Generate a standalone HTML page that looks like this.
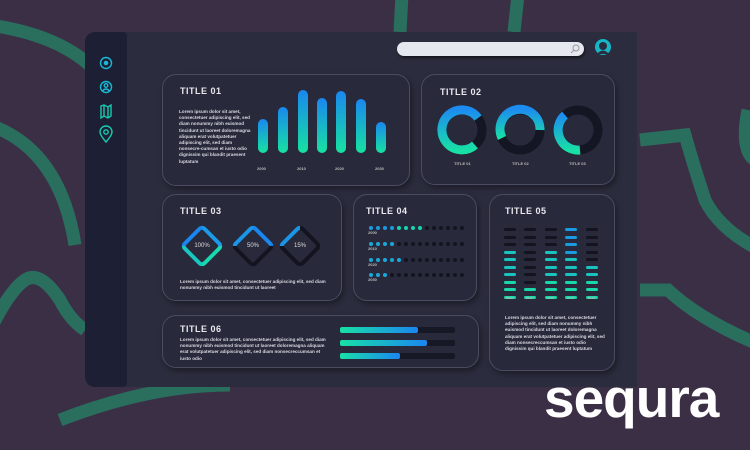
<!DOCTYPE html>
<html><head><meta charset="utf-8"><style>
*{margin:0;padding:0;box-sizing:border-box}
body{width:750px;height:450px;overflow:hidden;background:#3b2f45;font-family:"Liberation Sans",sans-serif;position:relative}
.a{position:absolute}
.panel{left:85px;top:32px;width:552px;height:355px;background:#2b2c3d;border-radius:10px 0 0 10px}
.side{left:85px;top:32px;width:42px;height:355px;background:#1d2034;border-radius:10px 4px 4px 10px}
.card{position:absolute;border:1.5px solid #4a4c62;border-radius:14px;background:#282a3b;box-shadow:2px 3px 6px rgba(0,0,0,.35)}
.t{position:absolute;color:#e8e8ef;font-size:9px;font-weight:bold;letter-spacing:.5px}
.tx{position:absolute;color:#d8d8e0;font-size:4.6px;line-height:6.2px;font-weight:bold}
.bar{position:absolute;width:10px;border-radius:5px;background:linear-gradient(#1a86f0,#17e3a0)}
.yr{position:absolute;color:#bbb;font-size:4px;font-weight:bold}
.dot{position:absolute;width:4px;height:4px;border-radius:50%}
.ds{position:absolute;width:12px;height:3px;border-radius:1.5px}
.dia{position:absolute;width:32px;height:32px;border-radius:6px;transform:rotate(45deg);border:4px solid #13141f}
.pc{position:absolute;color:#ddd;font-size:6px;width:40px;text-align:center}
</style></head><body>
<svg class="a" style="left:0;top:0" width="750" height="450">
<g fill="none" stroke="#2a6e5e" stroke-width="13">
<path d="M-10 25 Q60 35 95 70"/>
<path d="M-10 125 Q60 150 75 245"/>
<path d="M-10 330 Q10 290 25 280 Q40 270 60 300 Q70 320 85 330"/>
<path d="M60 420 Q150 385 230 385"/>
<path d="M402 -5 L400 32"/><path d="M518 -5 L514 32"/>
<path d="M640 140 L685 135 Q695 170 705 200 Q720 230 760 250"/>
<path d="M640 290 L668 290 Q700 320 760 345"/>
<path d="M748 110 Q740 150 755 160"/>
</g></svg>
<div class="a panel"></div>
<div class="a side"></div>
<svg class="a" style="left:98px;top:55px" width="20" height="90" fill="none" stroke="#19b8d6" stroke-width="1.4">
<circle cx="8" cy="8" r="5.5"/><circle cx="8" cy="8" r="1.6" fill="#19b8d6"/>
<circle cx="8" cy="32" r="5.5"/><circle cx="8" cy="30.5" r="1.8"/><path d="M4.5 36 Q8 32 11.5 36"/>
<path d="M3 51 L6 50 L10 52 L13 50 L13 61 L10 63 L6 61 L3 63 Z M6 50 V61 M10 52 V63" stroke="#19c8b0"/>
<path d="M8 87 Q2 80 2 77 A6 6 0 0 1 14 77 Q14 80 8 87 Z" stroke="#19c8b0"/><circle cx="8" cy="77" r="2.2" stroke="#19c8b0"/>
</svg>
<div class="a" style="left:397px;top:42px;width:187px;height:14px;border-radius:7px;background:#e6e8ef;box-shadow:1px 2px 2px rgba(0,0,0,.5)"></div>
<svg class="a" style="left:569px;top:43px" width="12" height="12" fill="none" stroke="#999" stroke-width="1"><circle cx="7" cy="5" r="3"/><path d="M5 7 L2 10"/></svg>
<svg class="a" style="left:594px;top:38px" width="18" height="18"><circle cx="9" cy="9" r="8" fill="#17b6c6"/><circle cx="9" cy="8" r="4" fill="#2b2c3d"/><path d="M3 16 Q9 9 15 16 Z" fill="#2b2c3d"/></svg>

<div class="card" style="left:162px;top:74px;width:248px;height:112px"></div>
<div class="t" style="left:180px;top:86px">TITLE 01</div>
<div class="tx" style="left:179px;top:109px;width:72px">Lorem ipsum dolor sit amet, consectetuer adipiscing elit, sed diam nonummy nibh euismod tincidunt ut laoreet doloremagna aliquam erat volutpatetuer adipiscing elit, sed diam nonsecre-cumsan et iusto odio dignissim qui blandit praesent luptatum</div>
<div class="bar" style="left:258px;top:119px;height:34px"></div>
<div class="bar" style="left:278px;top:107px;height:46px"></div>
<div class="bar" style="left:298px;top:90px;height:63px"></div>
<div class="bar" style="left:317px;top:98px;height:55px"></div>
<div class="bar" style="left:336px;top:91px;height:62px"></div>
<div class="bar" style="left:356px;top:99px;height:54px"></div>
<div class="bar" style="left:376px;top:122px;height:31px"></div>
<div class="yr" style="left:257px;top:166px">2000</div><div class="yr" style="left:297px;top:166px">2010</div><div class="yr" style="left:335px;top:166px">2020</div><div class="yr" style="left:375px;top:166px">2030</div>

<div class="card" style="left:421px;top:74px;width:194px;height:111px"></div>
<div class="t" style="left:440px;top:87px">TITLE 02</div>
<svg class="a" style="left:430px;top:100px" width="180" height="60">
<defs><linearGradient id="g" x1="0" y1="0" x2="0" y2="1"><stop offset="0" stop-color="#1d8cf0"/><stop offset="1" stop-color="#18e0a6"/></linearGradient></defs>
<g fill="none" stroke-width="9">
<circle cx="32" cy="30" r="20" stroke="#151624"/><path d="M45 45 A20 20 0 1 1 48 18" stroke="url(#g)"/>
<circle cx="90" cy="30" r="20" stroke="#151624"/><path d="M72 38 A20 20 0 1 1 110 30" stroke="url(#g)"/>
<circle cx="148" cy="30" r="20" stroke="#151624"/><path d="M135 15 A20 20 0 0 0 150 50" stroke="url(#g)"/>
</g></svg>
<div class="yr" style="left:454px;top:161px">TITLE 01</div><div class="yr" style="left:512px;top:161px">TITLE 02</div><div class="yr" style="left:569px;top:161px">TITLE 03</div>

<div class="card" style="left:162px;top:194px;width:180px;height:107px"></div>
<div class="t" style="left:180px;top:206px">TITLE 03</div>
<div class="dia" style="left:186px;top:230px;border-color:#1a9ae8 #18d8b0 #18c8c0 #1a86f0"></div>
<div class="dia" style="left:237px;top:230px;border-color:#1a86f0 #13141f #13141f #1a96e8"></div>
<div class="dia" style="left:284px;top:230px;border-color:#13141f #13141f #13141f #1a96e8"></div>
<div class="pc" style="left:182px;top:243px">100%</div><div class="pc" style="left:233px;top:243px">50%</div><div class="pc" style="left:280px;top:243px">15%</div>
<div class="tx" style="left:180px;top:279px;width:155px">Lorem ipsum dolor sit amet, consectetuer adipiscing elit, sed diam nonummy nibh euismod tincidunt ut laoreet</div>

<div class="card" style="left:353px;top:194px;width:124px;height:107px"></div>
<div class="t" style="left:366px;top:206px">TITLE 04</div>
<div id="d4"></div>
<div class="yr" style="left:368px;top:230px">2000</div><div class="yr" style="left:368px;top:246px">2010</div><div class="yr" style="left:368px;top:262px">2020</div><div class="yr" style="left:368px;top:277px">2030</div>

<div class="card" style="left:489px;top:194px;width:126px;height:177px"></div>
<div class="t" style="left:505px;top:206px">TITLE 05</div>
<div id="d5"></div>
<div class="yr" style="left:506px;top:296px;font-size:3px">2000</div><div class="yr" style="left:526px;top:296px;font-size:3px">2010</div><div class="yr" style="left:547px;top:296px;font-size:3px">2020</div><div class="yr" style="left:567px;top:296px;font-size:3px">2030</div><div class="yr" style="left:588px;top:296px;font-size:3px">2040</div>
<div class="tx" style="left:505px;top:315px;width:102px">Lorem ipsum dolor sit amet, consectetuer adipiscing elit, sed diam nonummy nibh euismod tincidunt ut laoreet doloremagna aliquam erat volutpatetuer adipiscing elit, sed diam nonsecreccumsan et iusto odio dignissim qui blandit praesent luptatum</div>

<div class="card" style="left:162px;top:315px;width:317px;height:53px"></div>
<div class="t" style="left:180px;top:324px">TITLE 06</div>
<div class="tx" style="left:180px;top:337px;width:152px">Lorem ipsum dolor sit amet, consectetuer adipiscing elit, sed diam nonummy nibh euismod tincidunt ut laoreet doloremagna aliquam erat volutpatetuer adipiscing elit, sed diam nonsecreccumsan et iusto odio</div>
<div class="a" style="left:340px;top:327px;width:115px;height:6px;background:#161826;border-radius:2px"><div style="width:78px;height:6px;background:linear-gradient(90deg,#18e0a6,#1a86f0);border-radius:2px"></div></div>
<div class="a" style="left:340px;top:340px;width:115px;height:6px;background:#161826;border-radius:2px"><div style="width:87px;height:6px;background:linear-gradient(90deg,#18e0a6,#1a86f0);border-radius:2px"></div></div>
<div class="a" style="left:340px;top:353px;width:115px;height:6px;background:#161826;border-radius:2px"><div style="width:60px;height:6px;background:linear-gradient(90deg,#18e0a6,#1a86f0);border-radius:2px"></div></div>

<div class="a" style="left:544px;top:368px;color:#fff;font-size:55px;font-weight:bold;letter-spacing:-1px;line-height:60px">sequra</div>
<script>
var h='';var rows=[[226,8],[242,4],[258,5],[273,3]];
rows.forEach(function(r){for(var i=0;i<14;i++){var c=i<r[1]?(i<r[1]/2?'#1a9ae0':'#19d4b0'):'#131420';if(r[1]<8&&i<r[1])c='#1aa8d8';h+='<div class="dot" style="left:'+(369+i*7)+'px;top:'+r[0]+'px;background:'+c+'"></div>';}});
document.getElementById('d4').innerHTML=h;
h='';var cols=[[504,7],[524,2],[545,7],[565,10],[586,5]];
cols.forEach(function(c,j){for(var r=0;r<10;r++){var on=(10-r)<=c[1];var col=on?(j==3&&r<4?'#1a9ae0':(r>6?'#18d8a8':'#19c4c0')):'#131420';h+='<div class="ds" style="left:'+c[0]+'px;top:'+(228+r*7.5)+'px;background:'+col+'"></div>';}});
document.getElementById('d5').innerHTML=h;
</script>
</body></html>
